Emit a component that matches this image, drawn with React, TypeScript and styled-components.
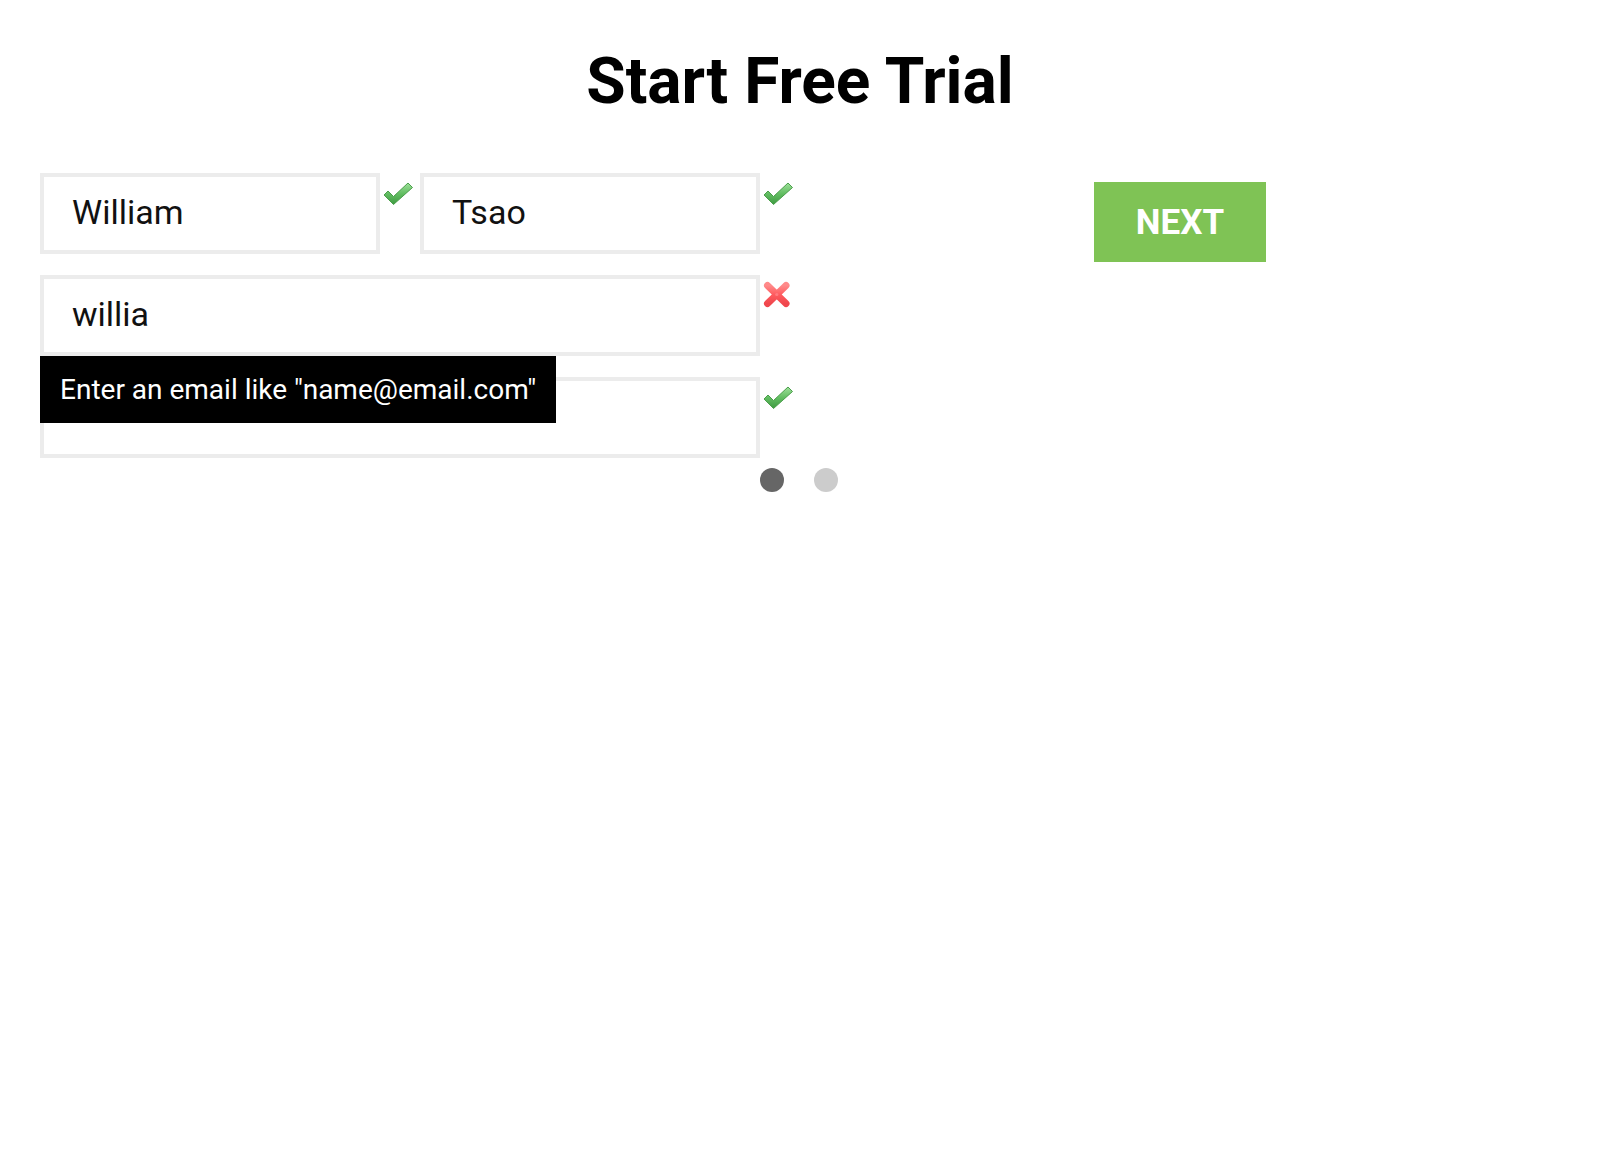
import React from "react";
import styled, { createGlobalStyle } from "styled-components";

const GlobalStyle = createGlobalStyle`
  html, body {
    margin: 0;
    padding: 0;
    background: #ffffff;
    font-family: Roboto, "Liberation Sans", Arial, sans-serif;
    color: #000;
  }
  * { box-sizing: border-box; }
`;

const Page = styled.div`
  width: 1600px;
  min-height: 1156px;
  display: flex;
  flex-direction: column;
`;

const Title = styled.h1`
  margin: 50px 0 0;
  font-family: Roboto, "Liberation Sans", Arial, sans-serif;
  font-weight: 700;
  font-size: 64px;
  line-height: 64px;
  text-align: center;
  color: #000;
`;

const Main = styled.div`
  display: flex;
  align-items: flex-start;
  padding-left: 40px;
  margin-top: 59px;
`;

const Form = styled.form`
  display: flex;
  flex-direction: column;
  gap: 21px;
  width: 760px;
  margin: 0;
`;

const Row = styled.div`
  display: flex;
`;

const Field = styled.div`
  display: flex;
  align-items: flex-start;
`;

const InputWrap = styled.div<{ $w: number }>`
  position: relative;
  width: ${(p) => p.$w}px;
`;

const Input = styled.input`
  display: block;
  width: 100%;
  height: 81px;
  border: 4px solid #ececec;
  padding: 0 0 4px 28px;
  margin: 0;
  font-family: Roboto, "Liberation Sans", Arial, sans-serif;
  font-size: 34px;
  color: #111;
  background: #fff;
  outline: none;
  border-radius: 0;
`;

const IconSlot = styled.div<{ $top?: number }>`
  width: 40px;
  padding: ${(p) => p.$top ?? 9}px 0 0 3px;
  display: flex;
`;

const Tooltip = styled.div`
  position: absolute;
  top: 100%;
  left: 0;
  width: 516px;
  height: 67px;
  background: #000;
  color: #fff;
  font-family: Roboto, "Liberation Sans", Arial, sans-serif;
  font-size: 28px;
  padding: 0 20px;
  display: flex;
  align-items: center;
  white-space: nowrap;
  z-index: 2;
`;

const NextButton = styled.button`
  margin: 9px 0 0 294px;
  width: 172px;
  height: 80px;
  border: none;
  background: #7fc355;
  color: #fff;
  font-family: Roboto, "Liberation Sans", Arial, sans-serif;
  font-weight: 700;
  font-size: 35px;
  cursor: pointer;
  padding: 0;
`;

const Dots = styled.div`
  display: flex;
  justify-content: center;
  gap: 30px;
  margin-top: 10px;
  padding-right: 2px;
`;

const Dot = styled.span<{ $active?: boolean }>`
  width: 24px;
  height: 24px;
  border-radius: 50%;
  background: ${(p) => (p.$active ? "#666666" : "#cccccc")};
`;

const CheckIcon: React.FC = () => (
  <svg width="31" height="24" viewBox="0 0 31 24">
    <defs>
      <linearGradient id="chk" x1="0" y1="0" x2="0" y2="1">
        <stop offset="0" stopColor="#9ee09a" />
        <stop offset="0.5" stopColor="#62bd62" />
        <stop offset="1" stopColor="#3f9a42" />
      </linearGradient>
    </defs>
    <polygon
      points="1,13 5,9 10.5,14.5 25,1 29.5,5.5 10.5,22.5"
      fill="url(#chk)"
      stroke="#4a9f4a"
      strokeWidth="1"
      strokeLinejoin="round"
    />
  </svg>
);

const CrossIcon: React.FC = () => (
  <svg width="28" height="27" viewBox="0 0 28 27">
    <defs>
      <linearGradient id="crs" x1="0" y1="0" x2="0" y2="1">
        <stop offset="0" stopColor="#ff8a8a" />
        <stop offset="0.5" stopColor="#ff5b5f" />
        <stop offset="1" stopColor="#f0474d" />
      </linearGradient>
    </defs>
    <g stroke="url(#crs)" strokeWidth="7" strokeLinecap="round">
      <line x1="4.5" y1="4.5" x2="23" y2="22.5" />
      <line x1="23" y1="4.5" x2="4.5" y2="22.5" />
    </g>
    <circle cx="13.8" cy="13.5" r="1.6" fill="#ff7b80" />
  </svg>
);

export default function App() {
  return (
    <Page>
      <GlobalStyle />
      <Title>Start Free Trial</Title>
      <Main>
        <Form onSubmit={(e) => e.preventDefault()}>
          <Row>
            <Field>
              <InputWrap $w={340}>
                <Input defaultValue="William" />
              </InputWrap>
              <IconSlot>
                <CheckIcon />
              </IconSlot>
            </Field>
            <Field>
              <InputWrap $w={340}>
                <Input defaultValue="Tsao" />
              </InputWrap>
              <IconSlot>
                <CheckIcon />
              </IconSlot>
            </Field>
          </Row>
          <Row>
            <Field>
              <InputWrap $w={720}>
                <Input defaultValue="willia" />
                <Tooltip>Enter an email like "name@email.com"</Tooltip>
              </InputWrap>
              <IconSlot $top={6}>
                <CrossIcon />
              </IconSlot>
            </Field>
          </Row>
          <Row>
            <Field>
              <InputWrap $w={720}>
                <Input type="password" defaultValue="" />
              </InputWrap>
              <IconSlot>
                <CheckIcon />
              </IconSlot>
            </Field>
          </Row>
        </Form>
        <NextButton type="button">NEXT</NextButton>
      </Main>
      <Dots>
        <Dot $active />
        <Dot />
      </Dots>
    </Page>
  );
}
